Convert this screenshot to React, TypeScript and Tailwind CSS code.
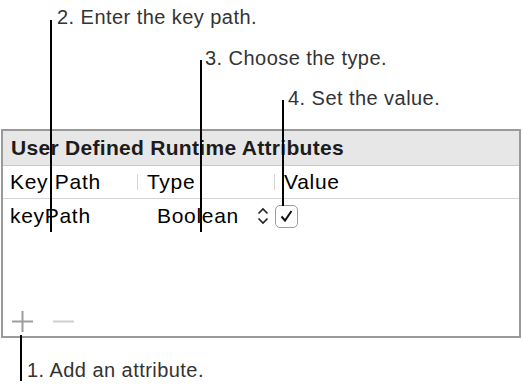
import React from "react";

const font = { fontFamily: '"Liberation Sans", Arial, sans-serif' };

function Callout({ className, children }: { className: string; children: React.ReactNode }) {
  return (
    <div className={`text-[20px] leading-[22px] tracking-[0.45px] text-[#333] ${className}`}>{children}</div>
  );
}

function Divider() {
  return <div className="w-px h-[16px] bg-[#d6d6d6] shrink-0" />;
}

export default function App() {
  return (
    <div className="relative w-[522px] h-[389px] bg-white overflow-hidden" style={font}>
      {/* callout labels */}
      <div className="pt-[6px]">
        <Callout className="pl-[57px]">2. Enter the key path.</Callout>
        <Callout className="pl-[205px] mt-[19px]">3. Choose the type.</Callout>
        <Callout className="pl-[288px] mt-[18px]">4. Set the value.</Callout>
      </div>

      {/* attributes panel */}
      <div className="ml-[1px] mt-[20px] w-[520px] h-[209px] border-2 border-[#9a9a9a] flex flex-col">
        <div className="h-[35px] bg-[#e7e7e7] border-b border-[#c9c9c9] flex items-center pl-[8px]">
          <span className="text-[21px] tracking-[0.3px] font-bold text-[#1c1c1c]">User Defined Runtime Attributes</span>
        </div>
        <div className="h-[33px] border-b border-[#d4d4d4] flex items-center text-[21px] tracking-[0.7px] text-black">
          <div className="w-[134px] pl-[7px]">Key Path</div>
          <Divider />
          <div className="w-[136px] pl-[9px]">Type</div>
          <Divider />
          <div className="pl-[9px]">Value</div>
        </div>
        <div className="h-[34px] flex items-center text-[21px] tracking-[0.7px] text-black">
          <div className="w-[154px] pl-[7px]">keyPath</div>
          <div className="w-[100px]">Boolean</div>
          <svg width="12" height="18" viewBox="0 0 12 18">
            <path d="M1.5 6.5 L6 2 L10.5 6.5" fill="none" stroke="#222" strokeWidth="1.6" />
            <path d="M1.5 11.5 L6 16 L10.5 11.5" fill="none" stroke="#222" strokeWidth="1.6" />
          </svg>
          <div className="ml-[6px] w-[23px] h-[23px] rounded-[5px] border border-[#9c9c9c] flex items-center justify-center bg-white">
            <svg width="15" height="14" viewBox="0 0 15 14">
              <path d="M2.5 7.5 L6 11.5 L12.5 2" fill="none" stroke="#111" strokeWidth="2" />
            </svg>
          </div>
        </div>
        <div className="flex-1" />
        <div className="h-[26px] flex items-start pl-[8px] gap-[18px]">
          <svg width="23" height="23" viewBox="0 0 23 23">
            <path d="M11.5 1 V22 M1 11.5 H22" stroke="#9d9d9d" strokeWidth="2" />
          </svg>
          <svg width="23" height="23" viewBox="0 0 23 23">
            <path d="M1 11.5 H22" stroke="#cfcfcf" strokeWidth="2" />
          </svg>
        </div>
      </div>

      <Callout className="pl-[27px] mt-[21px]">1. Add an attribute.</Callout>

      {/* pointer lines */}
      <div className="absolute left-[50px] top-[20px] w-[2px] h-[212px] bg-black" />
      <div className="absolute left-[200px] top-[60px] w-[2px] h-[172px] bg-black" />
      <div className="absolute left-[282px] top-[100px] w-[2px] h-[106px] bg-black" />
      <div className="absolute left-[20px] top-[335px] w-[2px] h-[46px] bg-black" />
    </div>
  );
}
